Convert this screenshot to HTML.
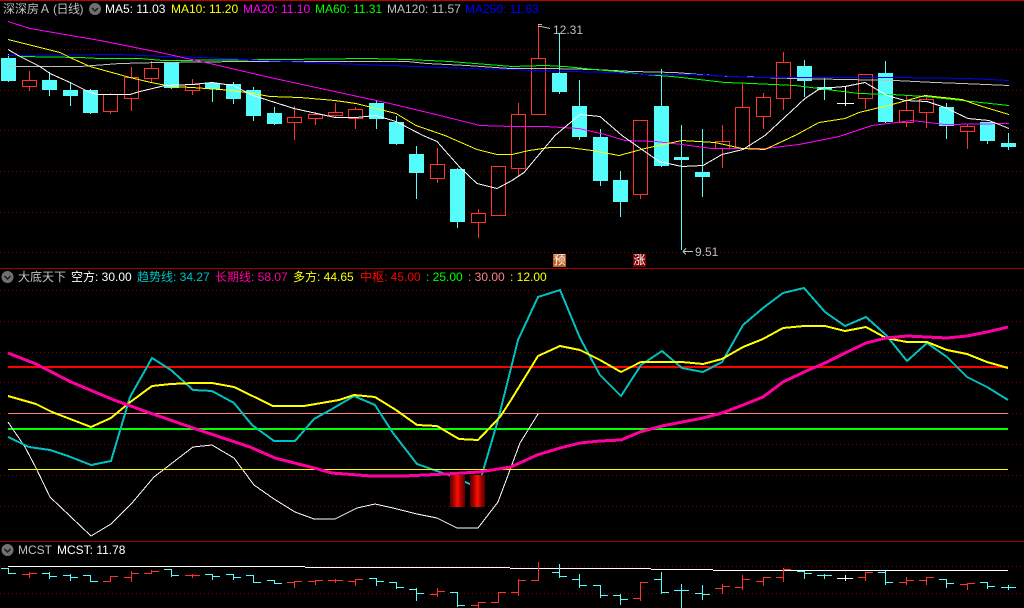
<!DOCTYPE html>
<html><head><meta charset="utf-8"><title>深深房Ａ</title>
<style>
html,body{margin:0;padding:0;background:#000;width:1024px;height:608px;overflow:hidden}
#w{position:relative;width:1024px;height:608px;background:#000;overflow:hidden;font:12px/14px "Liberation Sans","WenQuanYi Zen Hei","Noto Sans CJK SC",sans-serif}
#w span{position:absolute;white-space:nowrap}
svg{position:absolute;left:0;top:0}
path,polyline{fill:none;shape-rendering:crispEdges}
.tag{width:13px;height:13px;color:#fff;text-align:center;line-height:13px;font-size:12px}
</style></head><body><div id="w">
<svg width="1024" height="608" viewBox="0 0 1024 608">
<defs><linearGradient id="b" x1="0" x2="1" y1="0" y2="0"><stop offset="0" stop-color="#600000"/><stop offset=".2" stop-color="#900000"/><stop offset=".5" stop-color="#ff1000"/><stop offset=".8" stop-color="#900000"/><stop offset="1" stop-color="#600000"/></linearGradient></defs>
<!-- frames -->
<path stroke="#c00000" d="M0 .5H1024"/>
<path stroke="#a00000" d="M0 268.5H1024M0 541.5H1024"/>
<!-- grids -->
<path stroke="#780000" stroke-dasharray="1 3" d="M0 49.5H1024M0 90.5H1024M0 130.5H1024M0 171.5H1024M0 212.5H1024M0 252.5H1024M0 290.5H1024M0 321.5H1024M0 352.5H1024M0 382.5H1024M0 413.5H1024M0 444.5H1024M0 475.5H1024M0 506.5H1024M0 566.5H1024M0 593.5H1024"/>
<!-- cyan wicks -->
<path stroke="#54fcfc" d="M8.5 54V82M49.5 72V96M70.5 82V106M90.5 89V114M171.5 62V89M212.5 82V102M233.5 82V104M253.5 87V121M274.5 107V125M376.5 100V129M396.5 116V145M416.5 146V199M457.5 168V228M559.5 33V94M579.5 80V140M600.5 129V186M620.5 171V217M661.5 69V167M681.5 125V250M702.5 129V197M804.5 60V97M824.5 77V100M885.5 61V123M946.5 103V139M987.5 122V144M1008.5 133V150"/>
<!-- cyan bodies -->
<path style="fill:#54fcfc" d="M1 58h15V81H1zM42 80h15V90H42zM63 90h15V96H63zM83 90h15V113H83zM164 63h15V88H164zM205 83h15V89H205zM226 84h15V99H226zM246 90h15V116H246zM267 113h15V124H267zM369 103h15V119H369zM389 122h15V144H389zM409 154h15V173H409zM450 169h15V222H450zM552 73h15V92H552zM572 106h15V137H572zM593 137h15V181H593zM613 180h15V202H613zM654 106h15V166H654zM674 157h15V160H674zM695 172h15V177H695zM797 66h15V81H797zM817 87h15V90H817zM878 73h15V122H878zM939 107h15V126H939zM980 122h15V141H980zM1001 143h15V147H1001z"/>
<!-- white doji -->
<path stroke="#fff" d="M845.5 87V106M837 103.5H854"/>
<!-- red candles -->
<path stroke="#ff3232" d="M22.5 80.5h14V86.500h-14zM29.5 71V80M29.5 87V91
M103.5 94.5h14V111.5h-14zM110.5 93V94M110.5 112V114
M124.5 77.5h14V98.5h-14zM131.5 67V77M131.5 99V111
M144.5 68.5h14V78.5h-14zM151.5 61V68M151.5 79V82
M185.5 84.5h14V90.5h-14zM192.5 79V84M192.5 91V95
M287.5 117.5h14V122.5h-14zM294.5 106V117M294.5 123V140
M308.5 114.5h14V118.5h-14zM315.5 112V114M315.5 119V125
M328.5 112.5h14V115.5h-14zM335.5 103V112M335.5 116V117
M348.5 109.5h14V118.5h-14zM355.5 107V109M355.5 119V129
M430.5 164.5h14V178.5h-14zM437.5 148V164M437.5 179V183
M471.5 213.5h14V222.5h-14zM478.5 209V213M478.5 223V238
M491.5 166.5h14V215.5h-14z
M511.5 114.5h14V168.5h-14zM518.5 103V114M518.5 169V177
M531.5 58.5h14V114.5h-14zM538.5 25V58
M633.5 120.5h14V194.5h-14zM640.5 195V199
M715.5 141.5h14V148.5h-14zM722.5 125V141M722.5 149V168
M735.5 107.5h14V148.5h-14zM742.5 83V107
M756.5 97.5h14V116.5h-14zM763.5 93V97M763.5 117V129
M776.5 62.5h14V98.5h-14zM783.5 52V62M783.5 99V110
M858.5 74.5h14V98.5h-14zM865.5 99V109
M899.5 110.5h14V122.5h-14zM906.5 96V110M906.5 123V127
M919.5 99.5h14V112.5h-14zM926.5 95V99M926.5 113V128
M960.5 126.5h14V131.5h-14zM967.5 124V126M967.5 132V149"/>
<!-- MA lines -->
<polyline stroke="#c0c0c0" points="8,66.5 80,66.5 120,63.5 160,62.5 243,61.5 407,61.5 427,63.5 467,65.5 510,68.5 549,68.5 594,69.5 632,71.5 675,72.5 712,75.5 729,76.5 795,78.5 895,80.5 935,82.5 962,83.5 1009,85.5"/>
<polyline stroke="#00ff00" points="20,56.5 80,57.5 100,58.5 140,58.5 163,60.5 283,59.5 367,58.5 407,59.5 450,61.5 500,65.5 512,66.5 545,65.5 565,66.5 594,69.5 617,71.5 645,74.5 672,76.5 699,79.5 725,82.5 752,83.5 795,85.5 819,88.5 859,93.5 892,94.5 925,96.5 962,100.5 1009,105.5"/>
<polyline stroke="#0000ff" points="8,55.5 120,54.5 163,56.5 203,57.5 263,60.5 333,63.5 417,66.5 467,68.5 512,69.5 529,70.5 612,72.5 645,74.5 692,74.5 752,77.5 835,77.5 895,77.5 969,78.5 1009,80.5"/>
<polyline stroke="#ff00ff" points="8,21.5 30,28.5 100,40.5 160,52.5 210,63.5 270,77.5 330,90.5 390,103.5 440,115.5 480,125.5 512,126.5 545,126.5 579,128.5 605,134.5 625,140.5 655,141.5 682,144.5 712,148.5 765,148.5 799,144.5 839,136.5 872,125.5 912,120.5 945,124.5 1009,123.5"/>
<polyline stroke="#ffff00" points="8,39.5 60,52.5 70,57.5 90,66.5 130,77.5 151,82.5 172,86.5 192,87.5 233,90.5 253,93.5 270,96.5 300,97.5 335,100.5 356,103.5 396,113.5 416,125.5 445,135.5 477,149.5 497,154.5 512,154.5 529,150.5 550,147.5 569,147.5 592,150.5 619,155.5 645,148.5 682,140.5 715,142.5 742,148.5 765,149.5 797,134.5 819,122.5 845,118.5 859,112.5 892,104.5 925,95.5 962,99.5 979,105.5 1009,114.5"/>
<polyline stroke="#ffffff" points="8,49.5 20,56.5 40,66.5 50,73.5 70,82.5 88,91.5 97,94.5 130,94.5 140,91.5 165,85.5 192,84.5 212,82.5 233,85.5 253,95.5 294,108.5 335,117.5 356,117.5 376,115.5 396,121.5 423,135.5 437,141.5 460,167.5 477,183.5 497,188.5 512,180.5 524,172.5 555,135.5 580,114.5 600,116.5 622,135.5 659,161.5 682,166.5 703,165.5 722,154.5 743,149.5 765,135.5 805,98.5 820,88.5 845,86.5 865,82.5 887,95.5 905,100.5 927,101.5 945,107.5 968,118.5 989,120.5 1009,128.5"/>
<!-- arrows -->
<path stroke="#c0c0c0" d="M538 24.5H542M538 26.5H541M541 26.5L550 28.5M683 251.5H693M683 251.5L686 248.5M683 251.5L686 254.5"/>
<!-- sub panel -->
<path stroke="#ff8080" d="M8 413.5H1008"/>
<path stroke="#00ff00" stroke-width="2" d="M8 429H1008"/>
<path stroke="#ff0000" stroke-width="2" d="M8 367H1008"/>
<polyline stroke="#ffffff" points="8,422 25,447 36,468 50,497 91,536 111,524 132,503 154,477 193,447 212,445 234,458 254,485 274,499 295,512 314,519 335,519 357,508 375,504 393,508 417,514 437,518 457,528 478,528 498,502 520,443 538,414"/>
<polyline stroke="#00c0c0" stroke-width="2" points="8,437 29,447 50,450 68,456 91,465 111,461 130,397 152,358 171,370 193,390 212,391 234,403 252,425 274,441 295,441 314,419 332,409 354,396 375,405 393,433 417,464 437,471 457,478 478,488 498,420 518,340 538,297 560,290 580,338 600,375 621,396 641,365 662,351 682,368 703,372 722,362 743,325 763,308 783,293 804,288 825,312 845,326 866,317 886,335 907,361 927,343 947,357 967,377 987,387 1008,400"/>
<rect x="450" y="475" width="15" height="32" fill="url(#b)"/>
<rect x="470" y="475" width="15" height="32" fill="url(#b)"/>
<path stroke="#ffff00" d="M8 469.5H1008"/>
<polyline stroke="#ffff00" stroke-width="2" points="8,396 36,404 52,412 91,427 111,418 129,403 152,386 171,384 193,383 212,383 234,387 273,406 304,406 339,400 354,395 375,397 396,410 417,425 437,426 459,439 478,440 500,417 511,400 538,356 560,346 580,350 600,360 621,372 641,362 662,362 682,362 703,364 722,359 743,347 763,339 783,328 804,326 825,326 845,331 866,327 886,338 907,342 927,342 947,350 967,354 987,362 1008,368"/>
<polyline stroke="#ff00a0" stroke-width="3" points="8,353 36,364 71,382 114,400 150,413 196,429 250,447 275,458 314,468 332,473 371,476 404,476 446,474 479,472 511,467 537,455 560,448 580,443 600,441 621,440 640,432 662,426 703,418 722,413 743,405 763,397 783,382 804,372 825,363 845,353 866,343 886,338 907,336 927,337 947,338 967,336 987,332 1008,327"/>
<!-- MCST panel -->
<path stroke="#fff" d="M8 566.5H305M305 567.5H510M510 568.5H651M651 569.5H713M713 570.5H1008"/>
<path stroke="#54fcfc" d="M1 568.5H9M8 573.5H16M8.5 568V574M42 573.5H50M49 576.5H57M49.5 572V579M63 575.5H71M70 577.5H78M70.5 574V581M83 575.5H91M90 581.5H98M90.5 575V582M164 569.5H172M171 575.5H179M171.5 569V577M205 574.5H213M212 576.5H220M212.5 574V580M226 574.5H234M233 577.5H241M233.5 574V580M246 575.5H254M253 582.5H261M253.5 575V583M267 580.5H275M274 583.5H282M274.5 580V584M369 578.5H377M376 581.5H384M376.5 578V586M389 582.5H397M396 587.5H404M396.5 582V589M409 589.5H417M416 593.5H424M416.5 588V601M450 592.5H458M457 605.5H465M457.5 592V607M552 572.5H560M559 576.5H567M559.5 564V578M572 579.5H580M579 585.5H587M579.5 574V588M593 585.5H601M600 595.5H608M600.5 585V598M613 595.5H621M620 599.5H628M620.5 594V605M654 579.5H662M661 592.5H669M661.5 572V594M674 590.5H682M681 590.5H689M681.5 584V608M695 593.5H703M702 594.5H710M702.5 585V600M797 571.5H805M804 573.5H812M804.5 571V579M817 575.5H825M824 575.5H832M824.5 574V579M878 572.5H886M885 582.5H893M885.5 571V585M939 579.5H947M946 583.5H954M946.5 579V588M980 582.5H988M987 586.5H995M987.5 582V589M1001 587.5H1009M1008 587.5H1016M1008.5 585V590"/>
<path stroke="#ff3232" d="M22 574.5H30M29 573.5H37M29.5 572V578M103 581.5H111M110 576.5H118M110.5 576V582M124 577.5H132M131 573.5H139M131.5 571V582M144 573.5H152M151 571.5H159M151.5 570V574M185 575.5H193M192 575.5H200M192.5 574V578M287 582.5H295M294 581.5H302M294.5 581V588M308 581.5H316M315 580.5H323M315.5 580V585M328 580.5H336M335 580.5H343M335.5 579V583M348 581.5H356M355 579.5H363M355.5 579V586M430 594.5H438M437 591.5H445M437.5 588V597M471 605.5H479M478 602.5H486M478.5 602V608M491 602.5H499M498 592.5H506M498.5 592V603M511 592.5H519M518 580.5H526M518.5 579V596M531 580.5H539M538.5 562V581M633 598.5H641M640 582.5H648M640.5 582V601M715 588.5H723M722 586.5H730M722.5 584V594M735 587.5H743M742 579.5H750M742.5 575V590M756 581.5H764M763 577.5H771M763.5 577V586M776 577.5H784M783 569.5H791M783.5 568V582M858 577.5H866M865 572.5H873M865.5 572V581M899 582.5H907M906 580.5H914M906.5 577V585M919 580.5H927M926 577.5H934M926.5 577V585M960 584.5H968M967 583.5H975M967.5 583V590"/>
<path stroke="#fff" d="M837 578.5H853M845.5 575V581"/>
<!-- icons -->
<circle cx="95" cy="9" r="6" fill="#707070"/><path stroke="#1a1a1a" stroke-width="1.5" d="M92 8l3 3 3-3" style="shape-rendering:auto"/>
<circle cx="7.5" cy="277" r="6" fill="#707070"/><path stroke="#1a1a1a" stroke-width="1.5" d="M4.500 276l3 3 3-3" style="shape-rendering:auto"/>
<circle cx="7.5" cy="550" r="6" fill="#707070"/><path stroke="#1a1a1a" stroke-width="1.5" d="M4.500 549l3 3 3-3" style="shape-rendering:auto"/>
</svg>
<!-- top header -->
<span style="left:3px;top:2px;color:#c0c0c0">深深房Ａ</span>
<span style="left:53px;top:2px;color:#c0c0c0;letter-spacing:-.5px">(日线)</span>
<span style="left:105px;top:2px;color:#fff">MA5: 11.03</span>
<span style="left:171px;top:2px;color:#ff0">MA10: 11.20</span>
<span style="left:243px;top:2px;color:#f0f">MA20: 11.10</span>
<span style="left:315px;top:2px;color:#0f0">MA60: 11.31</span>
<span style="left:387px;top:2px;color:#c0c0c0">MA120: 11.57</span>
<span style="left:465px;top:2px;color:#00f">MA250: 11.63</span>
<span style="left:553px;top:23px;color:#c0c0c0">12.31</span>
<span style="left:695px;top:245px;color:#c0c0c0">9.51</span>
<span class="tag" style="left:553px;top:254px;background:#c06020">预</span>
<span class="tag" style="left:633px;top:254px;background:#800000">涨</span>
<!-- sub header -->
<span style="left:18px;top:270px;color:#c0c0c0">大底天下</span>
<span style="left:71px;top:270px;color:#fff">空方: 30.00</span>
<span style="left:137px;top:270px;color:#00c0c0">趋势线: 34.27</span>
<span style="left:215px;top:270px;color:#ff00a0">长期线: 58.07</span>
<span style="left:293px;top:270px;color:#ff0">多方: 44.65</span>
<span style="left:360px;top:270px;color:#f00">中枢: 45.00</span>
<span style="left:426px;top:270px;color:#0f0">: 25.00</span>
<span style="left:468px;top:270px;color:#ff8080">: 30.00</span>
<span style="left:510px;top:270px;color:#ff0">: 12.00</span>
<!-- MCST header -->
<span style="left:18px;top:543px;color:#c0c0c0">MCST</span>
<span style="left:57px;top:543px;color:#fff">MCST: 11.78</span>
</div></body></html>
